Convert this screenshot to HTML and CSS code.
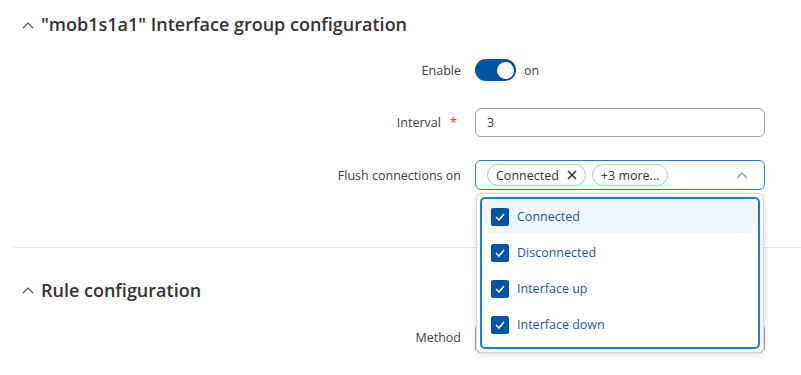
FILE: index.html
```html
<!DOCTYPE html>
<html lang="en">
<head>
    <meta charset="UTF-8">
    <meta name="viewport" content="width=device-width, initial-scale=1.0">
    <title>Interface group configuration</title>
    <link rel="stylesheet" href="styles.css">
</head>
<body>
    <!-- Interface group section -->
    <section class="section section-first">
        <div class="section-header">
            <svg class="chevron" width="12" height="8" viewBox="0 0 12 8"><path d="M1 7 L6 2 L11 7" fill="none" stroke="#555" stroke-width="1.2"/></svg>
            <h2>"mob1s1a1" Interface group configuration</h2>
        </div>

        <div class="form">
            <div class="row">
                <label class="label">Enable</label>
                <div class="field toggle-field">
                    <span class="toggle"><span class="knob"></span></span>
                    <span class="toggle-text">on</span>
                </div>
            </div>

            <div class="row">
                <label class="label">Interval <span class="req">*</span></label>
                <div class="field">
                    <div class="input">3</div>
                </div>
            </div>

            <div class="row">
                <label class="label">Flush connections on</label>
                <div class="field">
                    <div class="select select-open">
                        <span class="chip">Connected
                            <svg width="10" height="10" viewBox="0 0 10 10"><path d="M1 1 L9 9 M9 1 L1 9" stroke="#333" stroke-width="1.6"/></svg>
                        </span>
                        <span class="chip">+3 more...</span>
                        <svg class="select-arrow" width="12" height="8" viewBox="0 0 12 8"><path d="M1 7 L6 2 L11 7" fill="none" stroke="#9a9a9a" stroke-width="1.2"/></svg>

                        <!-- Open dropdown -->
                        <div class="dropdown">
                            <div class="dropdown-inner">
                                <div class="option option-hover"><span class="check"><svg width="10" height="8" viewBox="0 0 10 8"><path d="M1 4 L4 7 L9 1" fill="none" stroke="#fff" stroke-width="1.6"/></svg></span>Connected</div>
                                <div class="option"><span class="check"><svg width="10" height="8" viewBox="0 0 10 8"><path d="M1 4 L4 7 L9 1" fill="none" stroke="#fff" stroke-width="1.6"/></svg></span>Disconnected</div>
                                <div class="option"><span class="check"><svg width="10" height="8" viewBox="0 0 10 8"><path d="M1 4 L4 7 L9 1" fill="none" stroke="#fff" stroke-width="1.6"/></svg></span>Interface up</div>
                                <div class="option"><span class="check"><svg width="10" height="8" viewBox="0 0 10 8"><path d="M1 4 L4 7 L9 1" fill="none" stroke="#fff" stroke-width="1.6"/></svg></span>Interface down</div>
                            </div>
                        </div>
                    </div>
                </div>
            </div>
        </div>
    </section>

    <!-- Rule section -->
    <section class="section section-rule">
        <div class="section-header">
            <svg class="chevron" width="12" height="8" viewBox="0 0 12 8"><path d="M1 7 L6 2 L11 7" fill="none" stroke="#555" stroke-width="1.2"/></svg>
            <h2>Rule configuration</h2>
        </div>

        <div class="form">
            <div class="row">
                <label class="label">Method</label>
                <div class="field">
                    <div class="select"></div>
                </div>
            </div>
        </div>
    </section>
</body>
</html>
```

FILE: styles.css
```css
/* Common */
body {
    margin: 0;
    font-family: "Open Sans", sans-serif;
    color: #404040;
    background: #fff;
}

.section {
    margin-left: 14px;
}

.section-first {
    border-bottom: 1px solid #e6e6e6;
    padding-bottom: 45px;
}

.section-rule {
    padding-top: 20px;
}

/* Section header */
.section-header {
    display: flex;
    align-items: center;
    height: 44px;
    padding-left: 8px;
}

.section-first .section-header {
    height: 40px;
    padding-top: 4px;
}

.chevron {
    margin-right: 7px;
    margin-top: 1px;
}

.section-header h2 {
    margin: 0;
    font-size: 18px;
    font-weight: 600;
    color: #333;
}

/* Form rows */
.row {
    display: grid;
    grid-template-columns: 447px 290px;
    column-gap: 14px;
    align-items: center;
    height: 52.5px;
}

.label {
    text-align: right;
    font-size: 12.5px;
    color: #404040;
}

.req {
    color: #e2372b;
    margin-left: 6px;
    margin-right: 4px;
}

.field {
    position: relative;
}

/* Toggle */
.toggle-field {
    display: flex;
    align-items: center;
}

.toggle {
    display: inline-flex;
    justify-content: flex-end;
    align-items: center;
    width: 41px;
    height: 22px;
    border-radius: 11px;
    background: #0054a6;
    padding: 0 2px;
    box-sizing: border-box;
}

.knob {
    width: 17px;
    height: 17px;
    border-radius: 50%;
    background: #fff;
    box-shadow: 0 0 0 1px #1d3f6b;
}

.toggle-text {
    margin-left: 8px;
    font-size: 12.5px;
    color: #404040;
}

/* Inputs */
.input {
    height: 29px;
    border: 1px solid #a5a5a5;
    border-radius: 6px;
    box-sizing: border-box;
    padding-left: 11px;
    display: flex;
    align-items: center;
    font-size: 12.5px;
    color: #333;
}

.select {
    position: relative;
    height: 30px;
    border: 1px solid #a5a5a5;
    border-radius: 6px;
    box-sizing: border-box;
    padding-left: 11px;
    display: flex;
    align-items: center;
    gap: 6px;
}

.select-open {
    border-color: #1a7fd6;
}

.chip {
    display: inline-flex;
    align-items: center;
    gap: 8px;
    height: 22px;
    padding: 0 8px 0 8px;
    border: 1px solid #c2c2c2;
    border-radius: 11px;
    box-sizing: border-box;
    font-size: 12.5px;
    color: #333;
}

.select-arrow {
    position: absolute;
    right: 16px;
    top: 10px;
}

/* Dropdown */
.dropdown {
    position: absolute;
    top: 32px;
    left: 0;
    right: 0;
    background: #fff;
    border: 1px solid #d6d6d6;
    border-radius: 6px;
    box-shadow: 0 2px 6px rgba(0, 0, 0, 0.15);
    padding: 3px;
    z-index: 10;
}

.dropdown-inner {
    border: 2px solid #1a7fd6;
    border-radius: 5px;
    padding: 1px 3px 6px;
}

.option {
    height: 33px;
    margin-bottom: 3px;
    display: flex;
    align-items: center;
    padding-left: 6px;
    gap: 8px;
    border-radius: 7px;
    font-size: 12.5px;
    color: #1a56a0;
}

.option:last-child {
    margin-bottom: 0;
}

.option-hover {
    background: #f0f6fd;
}

.check {
    width: 18px;
    height: 18px;
    border-radius: 2px;
    background: #0054a6;
    display: inline-flex;
    align-items: center;
    justify-content: center;
}
```
